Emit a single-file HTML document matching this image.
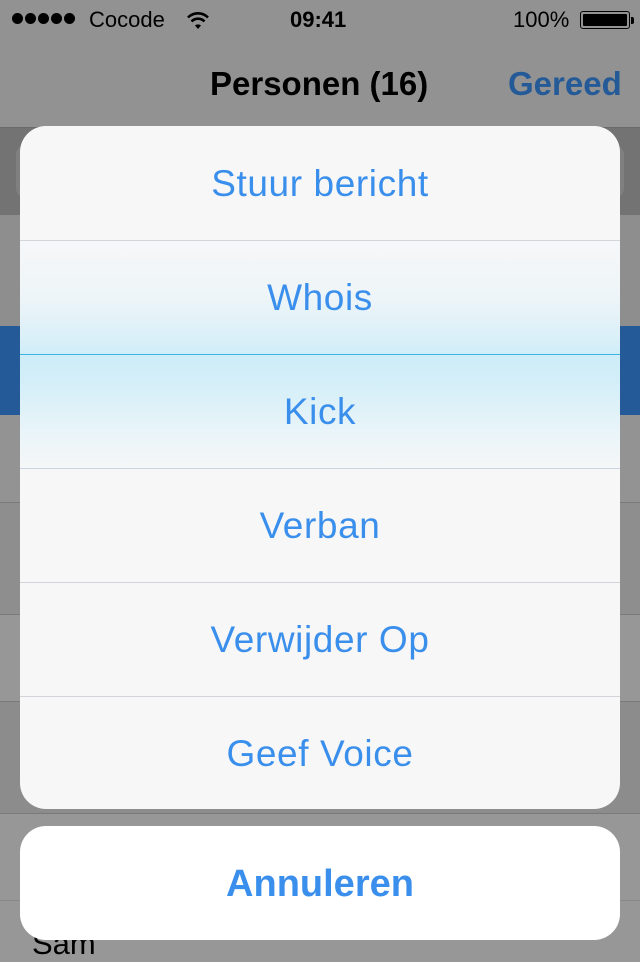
<!DOCTYPE html>
<html><head><meta charset="utf-8"><style>
*{margin:0;padding:0;box-sizing:border-box}
body{width:640px;height:960px;overflow:hidden;background:#979797;font-family:"Liberation Sans",sans-serif;position:relative}
.abs{position:absolute}
.sb{top:0;left:0;width:640px;height:40px;font-size:22px;color:#000}
.row{left:0;width:640px}
.sheet{left:20px;top:126px;width:600px;height:683px;border-radius:26px;background:#f7f7f7;overflow:hidden}
.it{position:absolute;left:0;width:600px;height:114px;line-height:116px;text-align:center;font-size:37px;letter-spacing:0.6px;color:#3a8fec}
.sep{position:absolute;left:0;width:600px;height:1px;background:#d4d4da}
.cancel{left:20px;top:826px;width:600px;height:114px;border-radius:26px;background:#fff;text-align:center;line-height:116px;font-size:38px;font-weight:bold;color:#3a8fec}
</style></head><body>
<div class="abs row" style="top:0;height:128px;background:#929292"></div>
<div class="abs row" style="top:127px;height:1px;background:#6a6a6a"></div>
<div class="abs row" style="top:128px;height:87px;background:#737373"></div>
<div class="abs" style="left:16px;top:145px;width:608px;height:53px;border-radius:10px;background:#808080"></div>
<div class="abs row" style="top:215px;height:111px;background:#8e8e8e"></div>
<div class="abs row" style="top:326px;height:89px;background:#235a97"></div>
<div class="abs row" style="top:415px;height:87px;background:#939393"></div>
<div class="abs row" style="top:502px;height:1px;background:#7a7a7a"></div>
<div class="abs row" style="top:503px;height:111px;background:#8e8e8e"></div>
<div class="abs row" style="top:614px;height:1px;background:#7a7a7a"></div>
<div class="abs row" style="top:615px;height:86px;background:#979797"></div>
<div class="abs row" style="top:701px;height:1px;background:#7a7a7a"></div>
<div class="abs row" style="top:702px;height:111px;background:#8c8c8c"></div>
<div class="abs row" style="top:813px;height:1px;background:#7a7a7a"></div>
<div class="abs row" style="top:900px;height:1px;background:#888"></div>
<div class="abs" style="left:32px;top:926px;font-size:31px;color:#000">Sam</div>

<div class="abs sb">
 <div class="abs" style="left:12px;top:13px;font-size:0">
  <span style="display:inline-block;width:11px;height:11px;border-radius:50%;background:#000;margin-right:2px"></span><span style="display:inline-block;width:11px;height:11px;border-radius:50%;background:#000;margin-right:2px"></span><span style="display:inline-block;width:11px;height:11px;border-radius:50%;background:#000;margin-right:2px"></span><span style="display:inline-block;width:11px;height:11px;border-radius:50%;background:#000;margin-right:2px"></span><span style="display:inline-block;width:11px;height:11px;border-radius:50%;background:#000"></span>
 </div>
 <div class="abs" style="left:89px;top:7px">Cocode</div>
 <svg class="abs" style="left:186px;top:10px" width="24" height="20" viewBox="0 0 24 20"><path d="M12 19 L9 15.5 A4.5 4.5 0 0 1 15 15.5 Z" fill="#000"/><path d="M5.5 11.5 A9 9 0 0 1 18.5 11.5" stroke="#000" stroke-width="2.6" fill="none"/><path d="M2 7.5 A14 14 0 0 1 22 7.5" stroke="#000" stroke-width="2.6" fill="none"/></svg>
 <div class="abs" style="left:290px;top:7px;font-weight:bold">09:41</div>
 <div class="abs" style="left:513px;top:7px">100%</div>
 <div class="abs" style="left:580px;top:11px;width:50px;height:18px;border:1.5px solid #000;border-radius:3px;padding:2px"><div style="width:100%;height:100%;background:#000;border-radius:1px"></div></div>
 <div class="abs" style="left:631px;top:17px;width:3px;height:7px;background:#000;border-radius:0 2px 2px 0"></div>
</div>
<div class="abs" style="left:210px;top:65px;font-size:33px;font-weight:bold;color:#000">Personen (16)</div>
<div class="abs" style="left:508px;top:65px;font-size:33px;font-weight:bold;color:#245a97">Gereed</div>

<div class="abs sheet">
 <div class="abs" style="left:0;top:114px;width:600px;height:228px;background:linear-gradient(#f6f7f8 0%,#eef5f8 25%,#d8eff8 45%,#cdedf8 52%,#d6eff8 65%,#eaf5f9 85%,#f5f7f8 100%)"></div>
 <div class="it" style="top:0">Stuur bericht</div>
 <div class="sep" style="top:114px"></div>
 <div class="it" style="top:114px">Whois</div>
 <div class="sep" style="top:228px;background:#36b6e0"></div>
 <div class="it" style="top:228px">Kick</div>
 <div class="sep" style="top:342px;background:#c8d4e0"></div>
 <div class="it" style="top:342px">Verban</div>
 <div class="sep" style="top:456px"></div>
 <div class="it" style="top:456px">Verwijder Op</div>
 <div class="sep" style="top:570px"></div>
 <div class="it" style="top:570px">Geef Voice</div>
</div>
<div class="abs cancel">Annuleren</div>
</body></html>
